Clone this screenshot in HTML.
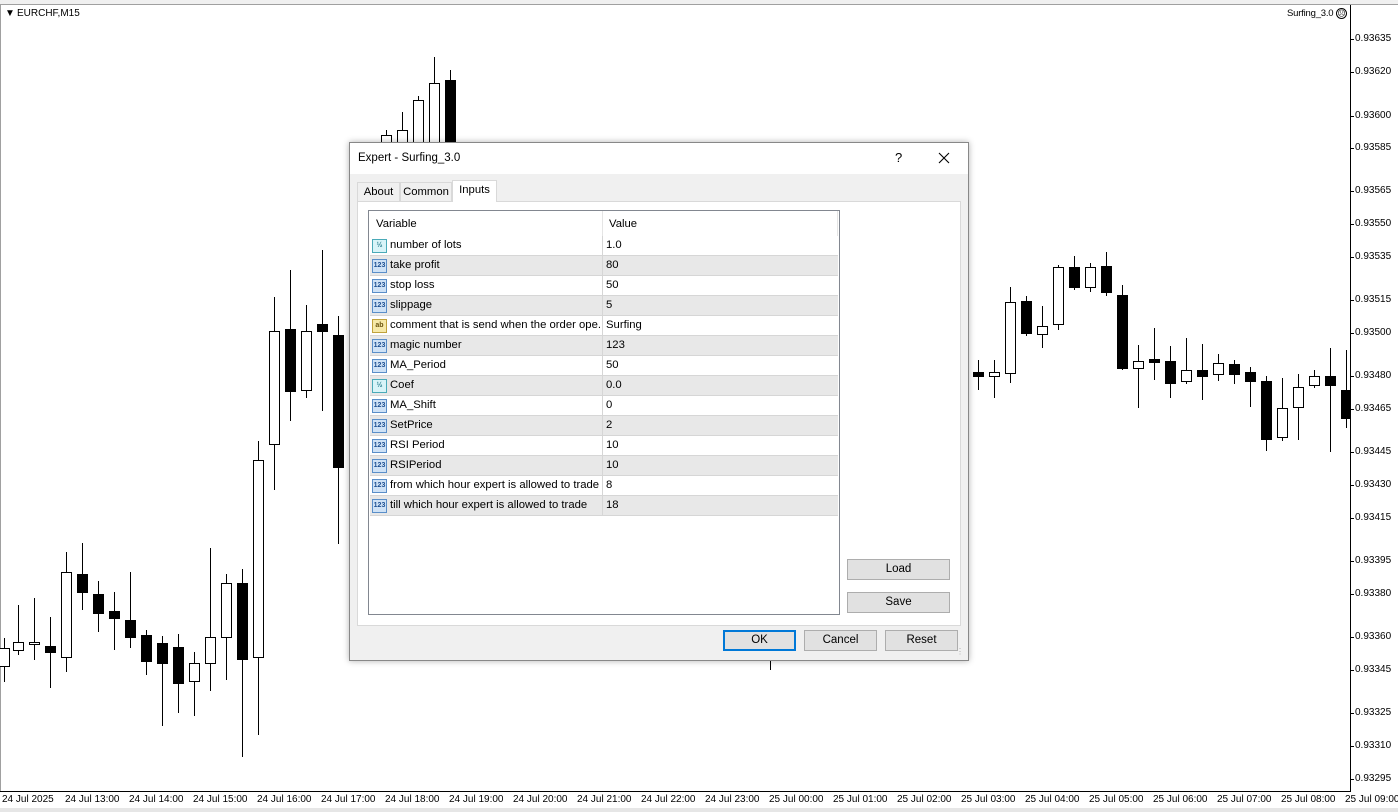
<!DOCTYPE html>
<html><head><meta charset="utf-8">
<style>
*{margin:0;padding:0;box-sizing:border-box}
body{width:1398px;height:812px;overflow:hidden;background:#fff;font-family:"Liberation Sans",sans-serif;position:relative}
.abs{position:absolute}
.pl{position:absolute;left:1355px;font-size:10px;color:#000;line-height:10px}
.tk{position:absolute;left:1350px;width:4px;height:1px;background:#000}
.tl{position:absolute;top:795px;font-size:10px;line-height:10px;color:#000;white-space:nowrap}
#dlg{position:absolute;left:349px;top:142px;width:620px;height:519px;background:#f0f0f0;border:1px solid #888;box-shadow:0 0 6px rgba(0,0,0,.3);font-size:12px}
.row{position:absolute;left:370px;width:468px;height:20px;border-bottom:1px solid #d6d6d6;font-size:11.3px;line-height:19px;white-space:nowrap}
.row.g{background:#e8e8e8}
.row .n{position:absolute;left:20px;width:212px;overflow:hidden}
.row .v{position:absolute;left:232px;border-left:1px solid #d6d6d6;height:20px;top:0;padding-left:3px}
.ic{position:absolute;left:2px;top:3px;width:15px;height:14px;border:1px solid #5a8ec8;background:#cfe2f6;font-size:7px;line-height:12px;text-align:center;color:#1d4f91;font-weight:bold}
.ic.h{border-color:#4aaab8;background:#d8f4f8;color:#2a7f90}
.ic.a{border-color:#c0a23c;background:#f6e9a8;color:#6a5410}
.btn{position:absolute;height:21px;background:#e1e1e1;border:1px solid #adadad;text-align:center;line-height:19px;font-size:11.5px}
</style></head><body>
<div class="abs" style="left:0;top:0;width:1398px;height:5px;background:#f0f0f0;border-bottom:1px solid #a0a0a0"></div>
<div class="abs" style="left:0;top:5px;width:1px;height:787px;background:#a0a0a0"></div>
<div class="abs" style="left:1350px;top:5px;width:1px;height:787px;background:#000"></div>
<div class="abs" style="left:0;top:791px;width:1351px;height:1px;background:#000"></div>
<div class="abs" style="left:0;top:808px;width:1398px;height:4px;background:#e6e6e6"></div>
<div class="abs" style="left:5px;top:9px;font-size:10px;line-height:10px">&#9660;</div>
<div class="abs" style="left:17px;top:9px;font-size:10px;line-height:10px">EURCHF,M15</div>
<div class="abs" style="left:1287px;top:9px;font-size:9.5px;line-height:10px;letter-spacing:-0.2px">Surfing_3.0</div>
<div class="abs" style="left:1336px;top:8px;width:11px;height:11px;border:1px solid #000;border-radius:50%;font-size:8px;line-height:9px;text-align:center">&#9785;</div>

<svg class="abs" style="left:0;top:0" width="1350" height="791" id="ch"></svg>

<div class="pl" style="top:34px">0.93635</div><div class="tk" style="top:39px"></div>
<div class="pl" style="top:67px">0.93620</div><div class="tk" style="top:72px"></div>
<div class="pl" style="top:111px">0.93600</div><div class="tk" style="top:116px"></div>
<div class="pl" style="top:143px">0.93585</div><div class="tk" style="top:148px"></div>
<div class="pl" style="top:186px">0.93565</div><div class="tk" style="top:191px"></div>
<div class="pl" style="top:219px">0.93550</div><div class="tk" style="top:224px"></div>
<div class="pl" style="top:252px">0.93535</div><div class="tk" style="top:257px"></div>
<div class="pl" style="top:295px">0.93515</div><div class="tk" style="top:300px"></div>
<div class="pl" style="top:328px">0.93500</div><div class="tk" style="top:333px"></div>
<div class="pl" style="top:371px">0.93480</div><div class="tk" style="top:376px"></div>
<div class="pl" style="top:404px">0.93465</div><div class="tk" style="top:409px"></div>
<div class="pl" style="top:447px">0.93445</div><div class="tk" style="top:452px"></div>
<div class="pl" style="top:480px">0.93430</div><div class="tk" style="top:485px"></div>
<div class="pl" style="top:513px">0.93415</div><div class="tk" style="top:518px"></div>
<div class="pl" style="top:556px">0.93395</div><div class="tk" style="top:561px"></div>
<div class="pl" style="top:589px">0.93380</div><div class="tk" style="top:594px"></div>
<div class="pl" style="top:632px">0.93360</div><div class="tk" style="top:637px"></div>
<div class="pl" style="top:665px">0.93345</div><div class="tk" style="top:670px"></div>
<div class="pl" style="top:708px">0.93325</div><div class="tk" style="top:713px"></div>
<div class="pl" style="top:741px">0.93310</div><div class="tk" style="top:746px"></div>
<div class="pl" style="top:774px">0.93295</div><div class="tk" style="top:779px"></div>

<div class="tl" style="left:2px">24 Jul 2025</div>
<div class="tl" style="left:65px">24 Jul 13:00</div>
<div class="tl" style="left:129px">24 Jul 14:00</div>
<div class="tl" style="left:193px">24 Jul 15:00</div>
<div class="tl" style="left:257px">24 Jul 16:00</div>
<div class="tl" style="left:321px">24 Jul 17:00</div>
<div class="tl" style="left:385px">24 Jul 18:00</div>
<div class="tl" style="left:449px">24 Jul 19:00</div>
<div class="tl" style="left:513px">24 Jul 20:00</div>
<div class="tl" style="left:577px">24 Jul 21:00</div>
<div class="tl" style="left:641px">24 Jul 22:00</div>
<div class="tl" style="left:705px">24 Jul 23:00</div>
<div class="tl" style="left:769px">25 Jul 00:00</div>
<div class="tl" style="left:833px">25 Jul 01:00</div>
<div class="tl" style="left:897px">25 Jul 02:00</div>
<div class="tl" style="left:961px">25 Jul 03:00</div>
<div class="tl" style="left:1025px">25 Jul 04:00</div>
<div class="tl" style="left:1089px">25 Jul 05:00</div>
<div class="tl" style="left:1153px">25 Jul 06:00</div>
<div class="tl" style="left:1217px">25 Jul 07:00</div>
<div class="tl" style="left:1281px">25 Jul 08:00</div>
<div class="tl" style="left:1345px">25 Jul 09:00</div>

<div id="dlg">
 <div class="abs" style="left:0;top:0;width:618px;height:31px;background:#fff"></div>
 <div class="abs" style="left:8px;top:9px;font-size:11.5px">Expert - Surfing_3.0</div>
 <div class="abs" style="left:545px;top:7px;font-size:13px">?</div>
 <svg class="abs" style="left:588px;top:9px" width="12" height="12"><path d="M1 1L11 11M11 1L1 11" stroke="#000" stroke-width="1.1"/></svg>
 <div class="abs" style="left:7px;top:58px;width:604px;height:425px;background:#fff;border:1px solid #d9d9d9"></div>
 <div class="abs" style="left:7px;top:39px;width:43px;height:20px;border:1px solid #d9d9d9;background:#f0f0f0;font-size:11.3px;line-height:19px;text-align:center">About</div>
 <div class="abs" style="left:50px;top:39px;width:52px;height:20px;border:1px solid #d9d9d9;background:#f0f0f0;font-size:11.3px;line-height:19px;text-align:center">Common</div>
 <div class="abs" style="left:102px;top:37px;width:45px;height:22px;border:1px solid #d9d9d9;border-bottom:none;background:#fff;font-size:11.3px;line-height:19px;text-align:center">Inputs</div>
 <div class="abs" style="left:18px;top:67px;width:472px;height:405px;border:1px solid #828790;background:#fff"></div>
 <div class="abs" style="left:26px;top:75px;font-size:11.3px">Variable</div>
 <div class="abs" style="left:252px;top:68px;width:1px;height:25px;background:#e5e5e5"></div>
 <div class="abs" style="left:259px;top:75px;font-size:11.3px">Value</div>
 <div class="abs" style="left:487px;top:68px;width:1px;height:25px;background:#e5e5e5"></div>
 <div class="btn" style="left:497px;top:416px;width:103px">Load</div>
 <div class="btn" style="left:497px;top:449px;width:103px">Save</div>
 <div class="btn" style="left:373px;top:487px;width:73px;border:2px solid #0078d7;line-height:17px">OK</div>
 <div class="btn" style="left:454px;top:487px;width:73px">Cancel</div>
 <div class="btn" style="left:535px;top:487px;width:73px">Reset</div>
 <div class="abs" style="left:606px;top:505px;font-size:8px;color:#aaa;line-height:8px">&#8942;</div>
</div>

<div class="row" style="top:236px"><span class="ic h">½</span><span class="n">number of lots</span><span class="v">1.0</span></div>
<div class="row g" style="top:256px"><span class="ic">123</span><span class="n">take profit</span><span class="v">80</span></div>
<div class="row" style="top:276px"><span class="ic">123</span><span class="n">stop loss</span><span class="v">50</span></div>
<div class="row g" style="top:296px"><span class="ic">123</span><span class="n">slippage</span><span class="v">5</span></div>
<div class="row" style="top:316px"><span class="ic a">ab</span><span class="n">comment that is send when the order ope...</span><span class="v">Surfing</span></div>
<div class="row g" style="top:336px"><span class="ic">123</span><span class="n">magic number</span><span class="v">123</span></div>
<div class="row" style="top:356px"><span class="ic">123</span><span class="n">MA_Period</span><span class="v">50</span></div>
<div class="row g" style="top:376px"><span class="ic h">½</span><span class="n">Coef</span><span class="v">0.0</span></div>
<div class="row" style="top:396px"><span class="ic">123</span><span class="n">MA_Shift</span><span class="v">0</span></div>
<div class="row g" style="top:416px"><span class="ic">123</span><span class="n">SetPrice</span><span class="v">2</span></div>
<div class="row" style="top:436px"><span class="ic">123</span><span class="n">RSI Period</span><span class="v">10</span></div>
<div class="row g" style="top:456px"><span class="ic">123</span><span class="n">RSIPeriod</span><span class="v">10</span></div>
<div class="row" style="top:476px"><span class="ic">123</span><span class="n">from which hour expert is allowed to trade</span><span class="v">8</span></div>
<div class="row g" style="top:496px"><span class="ic">123</span><span class="n">till which hour expert is allowed to trade</span><span class="v">18</span></div>

<script>
var c=[[4,648,666,638,682,1],[18,642,650,605,655,1],[34,642,644,598,660,1],[50,646,652,617,688,0],[66,572,657,552,672,1],[82,574,592,543,610,0],[98,594,613,581,632,0],[114,611,618,592,650,0],[130,620,637,572,648,0],[146,635,661,630,675,0],[162,643,663,636,726,0],[178,647,683,634,713,0],[194,663,681,652,716,1],[210,637,663,548,691,1],[226,583,637,574,680,1],[242,583,659,569,757,0],[258,460,657,441,735,1],[274,331,444,297,490,1],[290,329,391,270,421,0],[306,331,390,305,398,1],[322,324,331,250,411,0],[338,335,467,316,544,0],[386,135,145,130,145,1],[402,130,145,112,145,1],[418,100,145,96,145,1],[434,83,145,57,145,1],[450,80,145,70,145,0],
[978,372,376,360,390,0],[994,372,376,360,398,1],[1010,302,373,287,383,1],[1026,301,333,296,336,0],[1042,326,334,306,348,1],[1058,267,324,265,330,1],[1074,267,287,256,290,0],[1090,267,287,263,292,1],[1106,266,292,252,296,0],[1122,295,368,285,370,0],[1138,361,368,345,408,1],[1154,359,362,328,380,0],[1170,361,383,346,398,0],[1186,370,381,338,384,1],[1202,370,376,344,400,0],[1218,363,374,354,381,1],[1234,364,374,360,384,0],[1250,372,381,367,407,0],[1266,381,439,376,451,0],[1282,408,437,378,441,1],[1298,387,407,374,440,1],[1314,376,385,370,388,1],[1330,376,385,348,452,0],[1346,390,418,350,428,0]];
var s='<line x1="967.5" y1="355" x2="967.5" y2="470" stroke="#000"/><line x1="770.5" y1="655" x2="770.5" y2="670" stroke="#000"/>';
c.forEach(function(k){var x=k[0];s+='<line x1="'+(x+.5)+'" y1="'+k[3]+'" x2="'+(x+.5)+'" y2="'+k[4]+'" stroke="#000"/>';
s+='<rect x="'+(x-4.5)+'" y="'+(k[1]+.5)+'" width="10" height="'+Math.max(1,k[2]-k[1])+'" fill="'+(k[5]?'#fff':'#000')+'" stroke="#000"/>';});
document.getElementById('ch').innerHTML=s;
</script>
</body></html>
